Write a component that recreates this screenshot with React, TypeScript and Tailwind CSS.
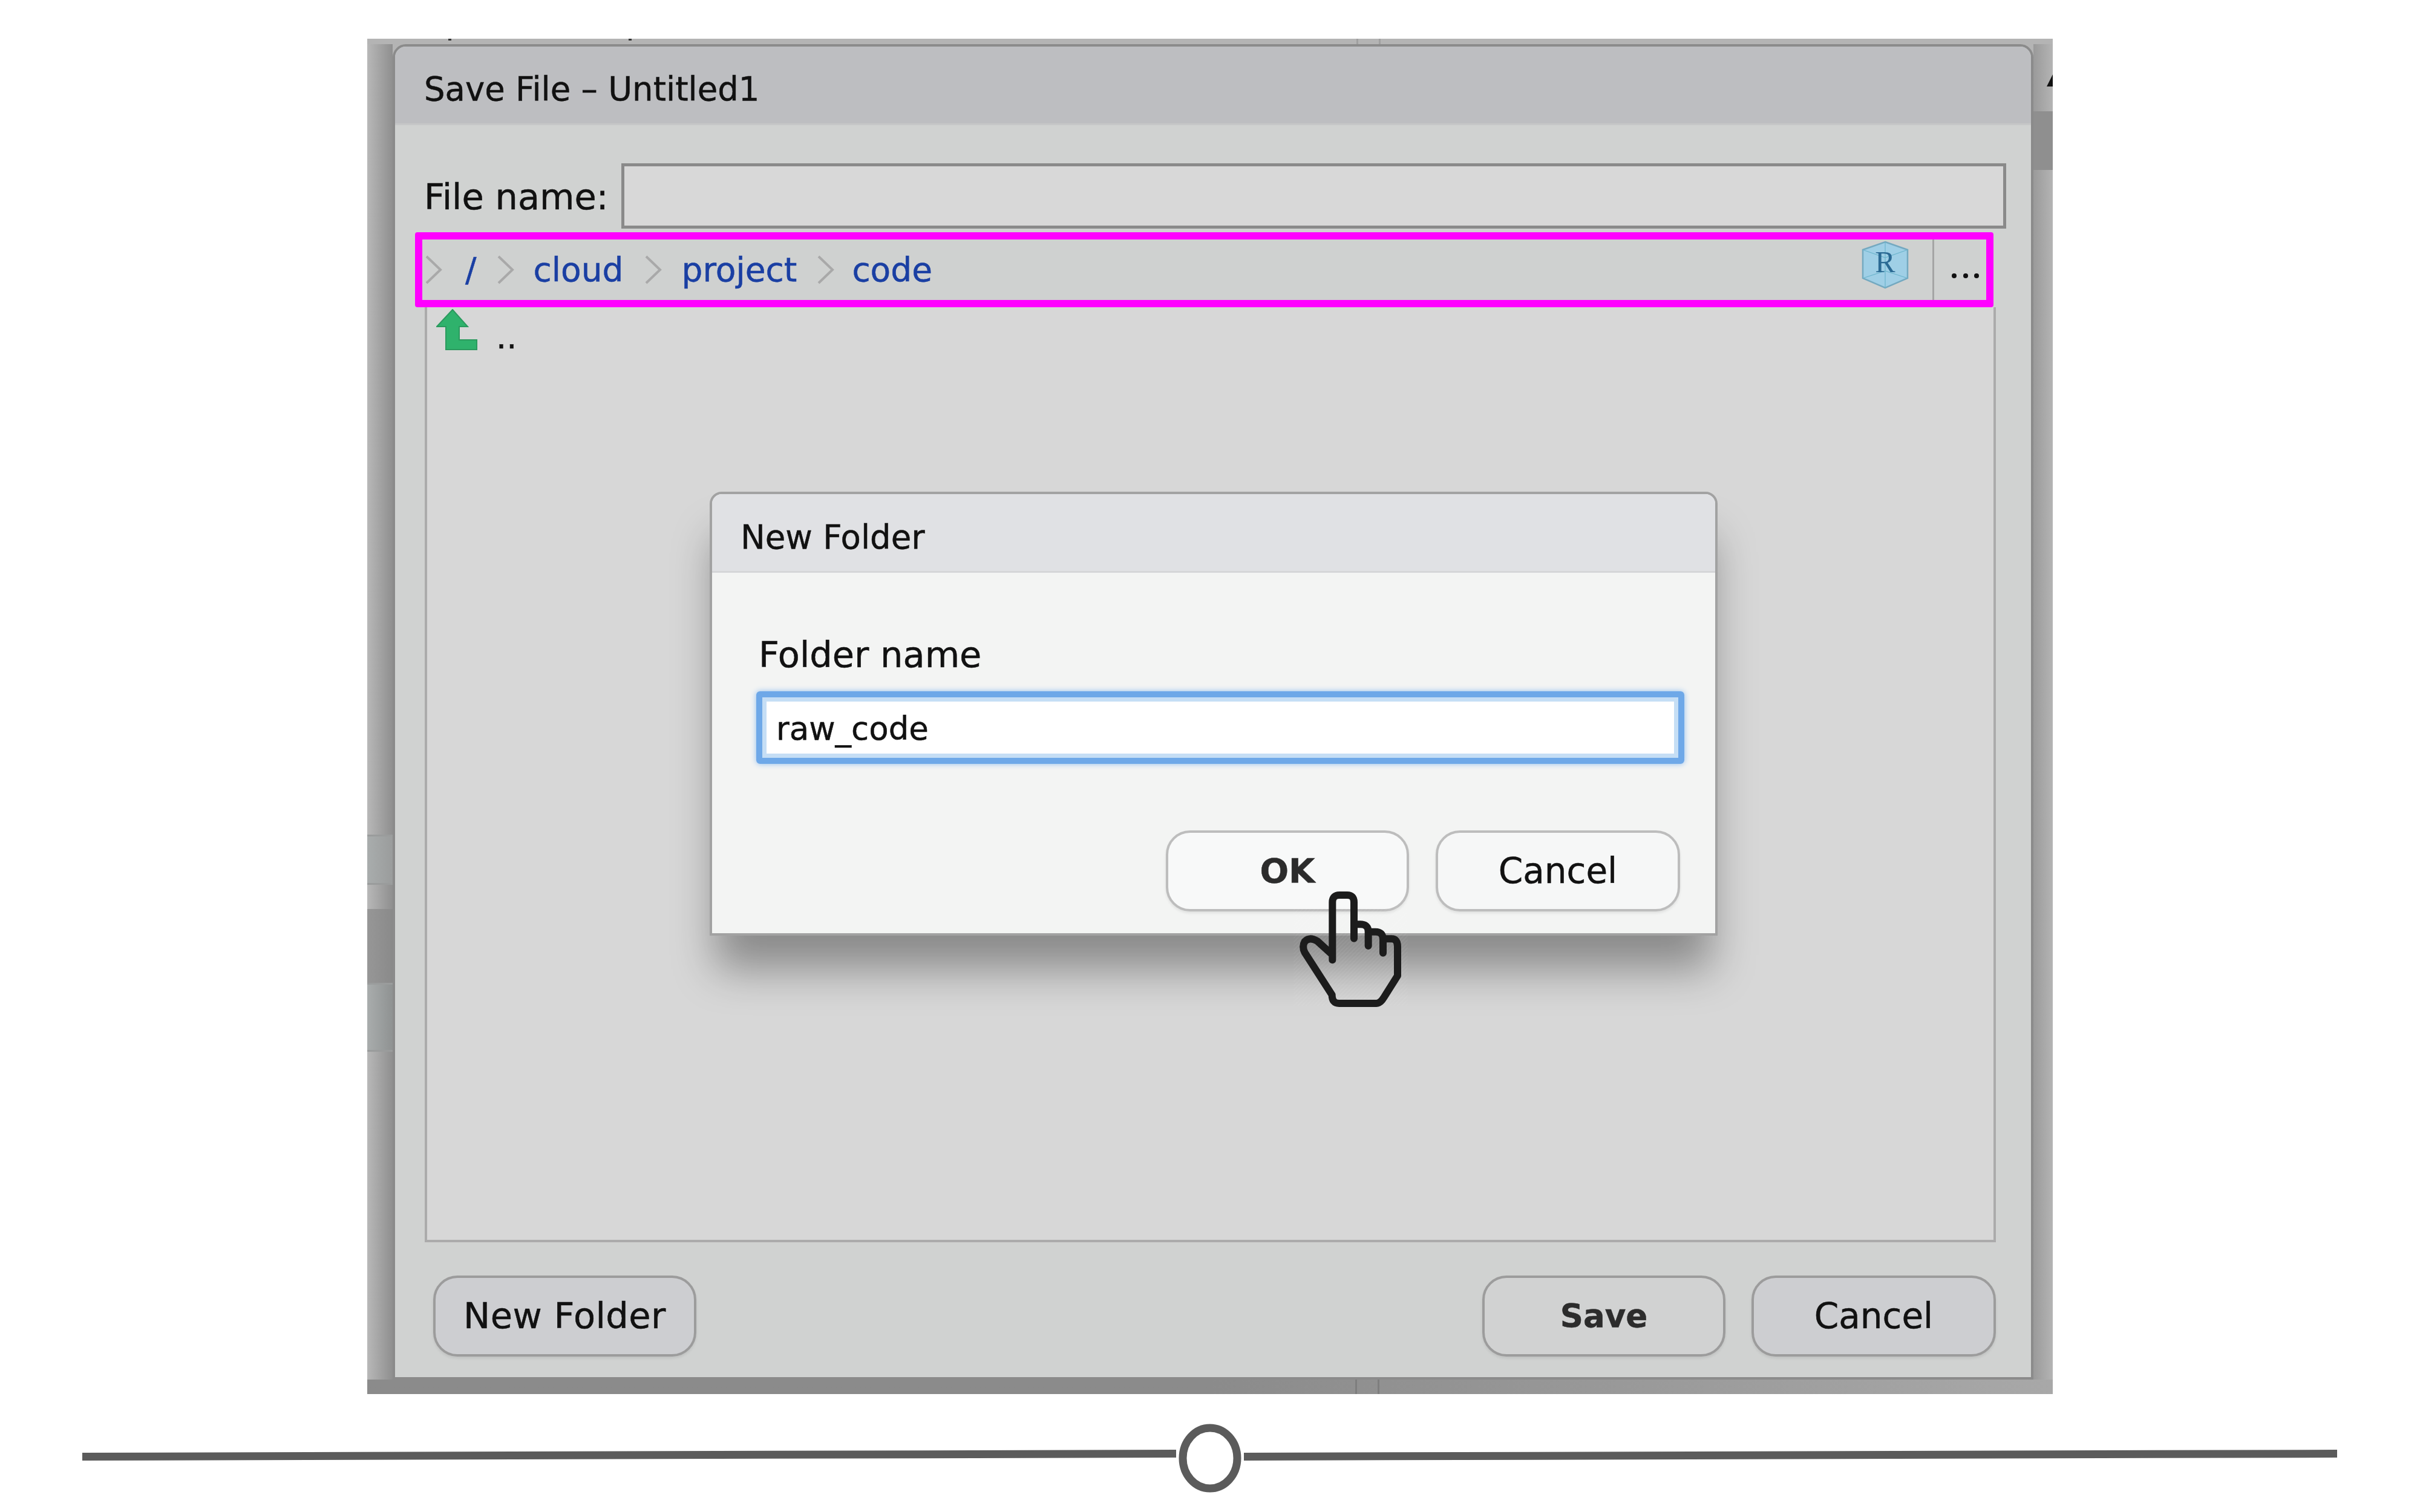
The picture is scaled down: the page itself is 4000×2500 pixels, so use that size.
const font = { fontFamily: '"DejaVu Sans", sans-serif' };

function Chevron({ className }: { className: string }) {
  return (
    <svg className={className} width="29" height="48" viewBox="0 0 29 48" fill="none">
      <polyline points="3,2 26,24 3,46" stroke="#a9a9a9" strokeWidth="4" />
    </svg>
  );
}

function GreenUp() {
  return (
    <svg className="ml-[15px] mt-[3px] shrink-0" width="68" height="68" viewBox="0 0 68 68">
      <polygon points="27,1 52,29 38,29 38,51 67,51 67,67 16,67 16,29 1,29" fill="#2fb26c" stroke="#2b9a5e" strokeWidth="2" />
    </svg>
  );
}

function RCube() {
  return (
    <svg width="78" height="80" viewBox="0 0 78 80" className="-mt-[16px] shrink-0">
      <polygon points="39,2 76,15 76,62 39,78 2,62 2,15" fill="#9fcfe6" stroke="#74a9c0" strokeWidth="2.5" />
      <path d="M2 15 L39 28 L76 15 M39 2 V78 M2 62 L39 50 L76 62" fill="none" stroke="#6cb4cc" strokeWidth="1.2" />
      <text x="39" y="52" textAnchor="middle" fontFamily="'Liberation Serif', serif" fontSize="50" fill="#2b6a94">R</text>
    </svg>
  );
}

function Hand() {
  return (
    <svg className="absolute left-[2100px] top-[1450px]" width="260" height="240" viewBox="0 0 780 720" fill="none">
      <defs>
        <pattern id="hatch" width="14" height="14" patternUnits="userSpaceOnUse" patternTransform="rotate(45)">
          <line x1="0" y1="0" x2="0" y2="14" stroke="#ffffff" strokeOpacity="0.16" strokeWidth="3" />
        </pattern>
      </defs>
      <rect x="115" y="75" width="565" height="565" fill="url(#hatch)" />
      <path
        d="M307 412 V125 Q307 90 342 90 H380 Q414 90 414 125 V305 M414 235 H445 Q485 235 485 272 V342 M485 272 H520 Q558 272 558 310 V377 M558 307 H600 Q630 307 630 345 V490 L562 598 Q545 627 525 627 H340 Q305 627 305 585 L170 375 Q155 345 170 320 Q195 295 232 318 L300 380"
        stroke="#1c1c1c"
        strokeWidth="36"
        strokeLinecap="round"
        strokeLinejoin="round"
      />
    </svg>
  );
}

function Slider() {
  return (
    <svg className="block" width="4000" height="195" viewBox="0 2305 4000 195">
      <polygon points="136,2402 1944,2397 1944,2410 136,2415" fill="#5b5b5b" />
      <polygon points="2056,2402 3863,2397 3863,2410 2056,2415" fill="#5b5b5b" />
      <ellipse cx="2000" cy="2411" rx="45" ry="50" fill="none" stroke="#5b5b5b" strokeWidth="13" />
    </svg>
  );
}

function Btn({ label, w, bg, border, bold, size, text }: { label: string; w: string; bg: string; border: string; bold?: boolean; size: string; text?: string }) {
  return (
    <div className={`flex h-[134px] ${w} items-center justify-center rounded-[40px] border-[4px] ${bg} ${border} ${size} ${text ?? "text-[#111111]"} ${bold ? "font-bold" : ""} shadow-[0_3px_4px_rgba(0,0,0,0.08)]`}>
      {label}
    </div>
  );
}

export default function App() {
  return (
    <div className="relative h-[2500px] w-[4000px] overflow-hidden bg-white [-webkit-text-stroke:0.5px]" style={font}>
      <div className="ml-[607px] pt-[64px]">
        <div className="flex w-[2786px] flex-col bg-[#b4b4b4]">
          <div className="flex h-[9px] items-start bg-[#b4b4b4]">
            <div className="ml-[134px] h-[3px] w-[5px] bg-[#333333]" />
            <div className="ml-[293px] h-[3px] w-[5px] bg-[#333333]" />
            <div className="ml-[1198px] h-full w-[40px] border-x-[3px] border-[#a0a0a0]" />
          </div>
          <div className="flex">
            <div className="flex w-[42px] flex-col bg-gradient-to-r from-[#b8b8b8] to-[#8f8f8f]">
              <div className="h-[1307px]" />
              <div className="h-[83px] border-y-[3px] border-[#9a9c9c] bg-gradient-to-r from-[#a9adad] to-[#9a9c9c]" />
              <div className="h-[40px]" />
              <div className="h-[122px] bg-gradient-to-r from-[#979797] to-[#8a8a8a]" />
              <div className="h-[114px] border-y-[3px] border-[#9a9c9c] bg-gradient-to-r from-[#a9adad] to-[#8f9292]" />
            </div>

            <div className="flex h-[2208px] w-[2712px] flex-col rounded-t-[22px] border-[4px] border-[#8b8b8b] bg-[#d0d2d1]">
              <div className="flex h-[130px] shrink-0 items-center rounded-t-[18px] border-b-[3px] border-[#c6c7c8] bg-[#bdbec1] pl-[48px] pt-[12px] text-[54.5px] leading-[64px] text-[#111111]">
                Save File – Untitled1
              </div>

              <div className="mt-[63px] flex h-[108px] shrink-0 pl-[48px] pr-[41px]">
                <div className="w-[326px] self-center pt-[4px] text-[59px] leading-[68px] text-[#111111]">File name:</div>
                <div className="h-full flex-1 border-[5px] border-[#8a8a8a] bg-[#d8d8d8]" />
              </div>

              <div className="ml-[33px] mt-[6px] flex h-[124px] w-[2609px] shrink-0 items-center rounded-[4px] border-[12px] border-[#ff00ff] bg-[#cfd1d0] text-[55px] leading-[64px] text-[#1a3fa3]">
                <Chevron className="ml-[4px] shrink-0" />
                <span className="ml-[38px]">/</span>
                <Chevron className="ml-[33px] shrink-0" />
                <span className="ml-[32px]">cloud</span>
                <Chevron className="ml-[35px] shrink-0" />
                <span className="ml-[32px]">project</span>
                <Chevron className="ml-[33px] shrink-0" />
                <span className="ml-[29px]">code</span>
                <div className="flex-1" />
                <RCube />
                <div className="ml-[39px] h-full w-[3px] bg-[#a5a5a5]" />
                <div className="ml-[29px] mr-[12px] flex h-full w-[45px] items-end justify-between pb-[36px]">
                  <span className="h-[8px] w-[8px] rounded-full bg-[#111111]" />
                  <span className="h-[8px] w-[8px] rounded-full bg-[#111111]" />
                  <span className="h-[8px] w-[8px] rounded-full bg-[#111111]" />
                </div>
              </div>

              <div className="ml-[49px] flex h-[1546px] w-[2597px] shrink-0 items-start border-x-[4px] border-b-[4px] border-[#ababab] bg-[#d7d7d7]">
                <GreenUp />
                <span className="ml-[31px] mt-[18px] text-[54px] leading-[64px] text-[#111111]">..</span>
              </div>

              <div className="flex flex-1 items-start pl-[63px] pr-[58px] pt-[55px]">
                <Btn label="New Folder" w="w-[435px]" bg="bg-[#cdced1]" border="border-[#9c9c9c]" size="text-[59px] tracking-[0.5px]" />
                <div className="flex-1" />
                <Btn label="Save" w="w-[402px]" bg="bg-[#d1d2d2]" border="border-[#9c9c9c]" size="text-[53px]" bold text="text-[#2c2c2c]" />
                <div className="w-[43px]" />
                <Btn label="Cancel" w="w-[404px]" bg="bg-[#cdced1]" border="border-[#9c9c9c]" size="text-[58px]" />
              </div>
            </div>

            <div className="flex w-[32px] flex-col bg-gradient-to-r from-[#9a9a9a] to-[#b4b4b4]">
              <div className="h-[50px]" />
              <svg width="32" height="21" viewBox="0 0 32 21" className="block">
                <polygon points="22,20 32,0 32,20" fill="#111111" />
              </svg>
              <div className="h-[40px]" />
              <div className="h-[97px] bg-[#8f8f8f]" />
            </div>
          </div>
          <div className="flex h-[24px] bg-gradient-to-r from-[#8b8b8b] via-[#8b8b8b] to-[#a8a8a8]">
            <div className="ml-[1633px] h-full w-[40px] border-x-[3px] border-[#7e7e7e]" />
          </div>
        </div>
      </div>

      <Slider />

      <div className="absolute left-[1173px] top-[813px] flex h-[734px] w-[1666px] flex-col rounded-t-[20px] border-[4px] border-[#a2a2a2] bg-[#f3f4f3] shadow-[0_65px_70px_-10px_rgba(0,0,0,0.36)]">
        <div className="flex h-[130px] shrink-0 items-center rounded-t-[16px] border-b-[3px] border-[#d5d6d8] bg-[#e0e1e4] pl-[47px] pt-[14px] text-[54.5px] leading-[64px] text-[#111111]">
          New Folder
        </div>
        <div className="ml-[77px] mt-[102px] text-[59px] leading-[68px] text-[#111111]">Folder name</div>
        <div className="ml-[73px] mt-[26px] h-[120px] w-[1534px] shrink-0 rounded-[6px] border-[10px] border-[#6ea8e8] shadow-[0_0_10px_#8fbdf0]">
          <div className="flex h-full items-center border-[7px] border-[#c5def5] bg-white pl-[16px] pt-[4px] text-[53px] leading-[62px] text-[#111111]">
            raw_code
          </div>
        </div>
        <div className="mt-[110px] flex items-start pl-[750px]">
          <Btn label="OK" w="w-[402px]" bg="bg-[#f8f9f9]" border="border-[#bdbdbd]" size="text-[56px]" bold text="text-[#2c2c2c]" />
          <div className="w-[44px]" />
          <Btn label="Cancel" w="w-[404px]" bg="bg-[#f6f7f7]" border="border-[#bdbdbd]" size="text-[58px]" />
        </div>
      </div>

      <Hand />
    </div>
  );
}
